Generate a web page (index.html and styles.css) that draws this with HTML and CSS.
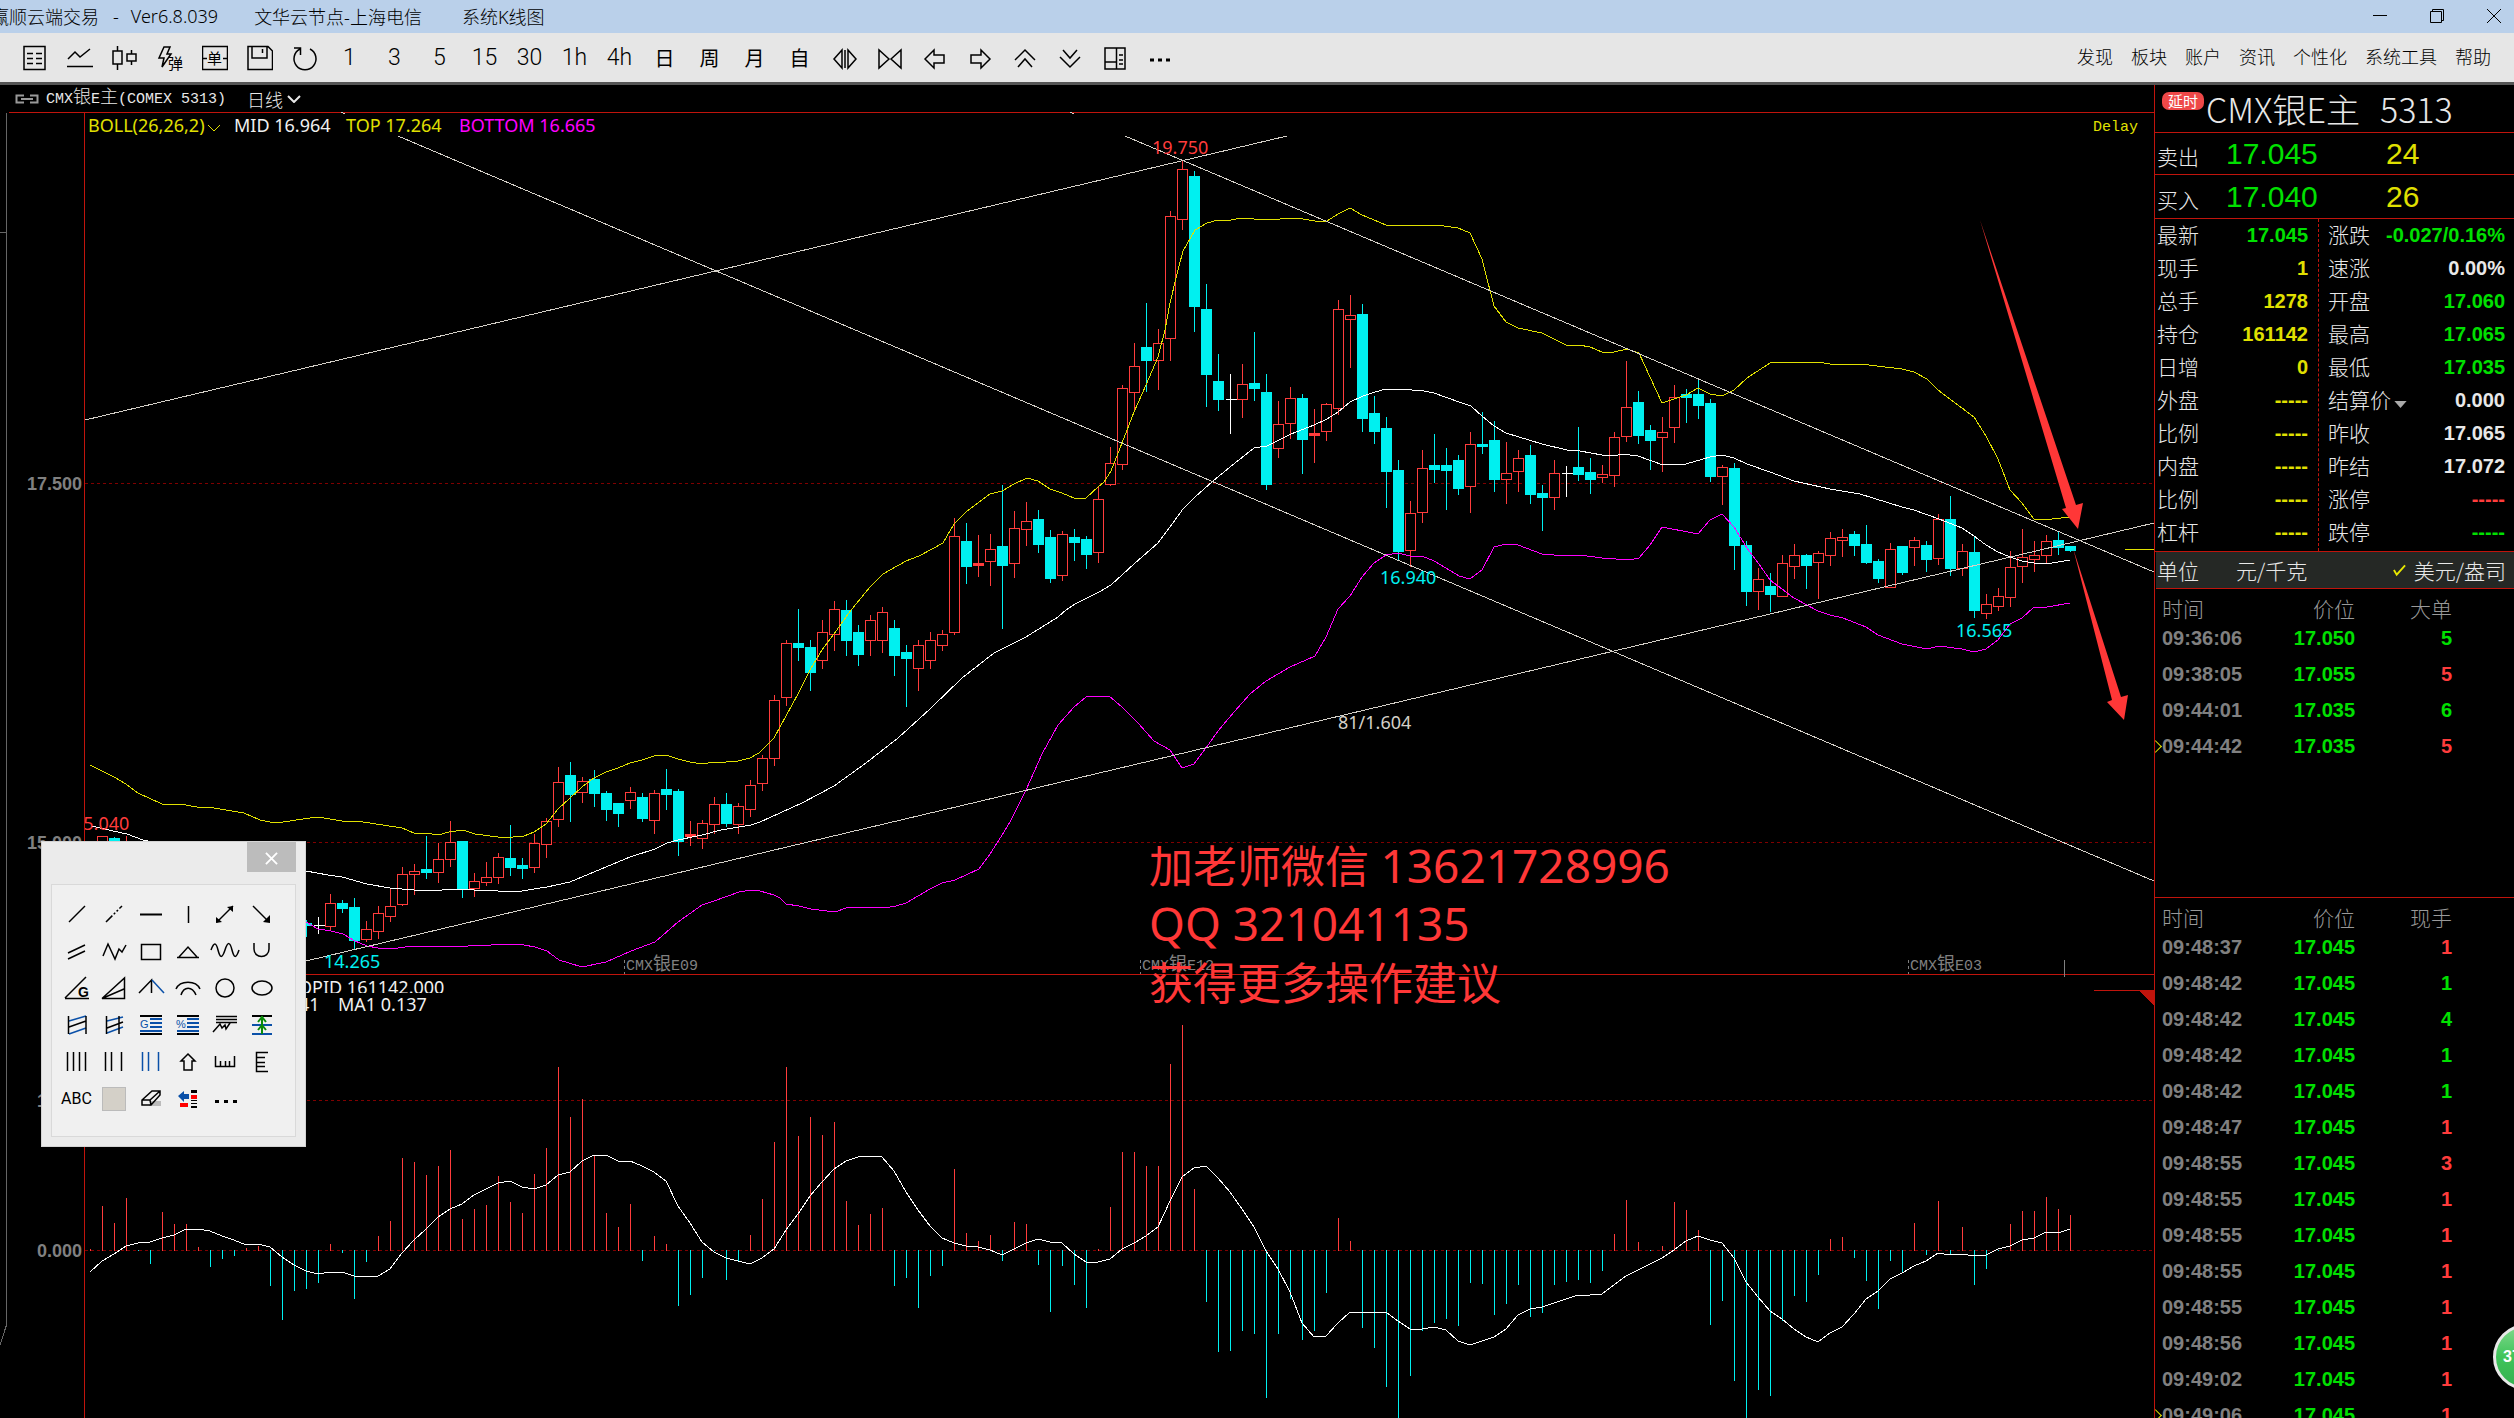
FILE: index.html
```html
<!DOCTYPE html>
<html lang="zh-CN">
<head>
<meta charset="utf-8">
<title>赢顺云端交易</title>
<link rel="stylesheet" href="styles.css">
</head>
<body>
<header class="titlebar">
  <span class="app">赢顺云端交易</span>
  <span class="dash">-</span>
  <span class="ver">Ver6.8.039</span>
  <span class="node">文华云节点-上海电信</span>
  <span>系统K线图</span>
  <div class="winbtns">
    <button aria-label="最小化"><svg viewBox="0 0 14 14"><path d="M0 6.500H14"/></svg></button>
    <button aria-label="还原"><svg viewBox="0 0 14 14"><path d="M.5 2.500H11.500V13.500H.5ZM2.500 2.500V.5H13.500V11.500H11.500"/></svg></button>
    <button aria-label="关闭"><svg viewBox="0 0 14 14"><path d="M0 0L14 14M14 0L0 14"/></svg></button>
  </div>
</header>

<nav class="toolbar">
  <div class="tools">
    <button aria-label="报价"><svg viewBox="0 0 26 26"><path d="M2 1.500H23V24.500H2ZM5 8.500H11M14 8.500H20M5 13.500H11M14 13.500H20M5 18.500H11M14 18.500H20"/></svg></button>
    <button aria-label="分时"><svg viewBox="0 0 26 26"><path d="M0 21.500H26M1 14L8 7L13 12L23 4"/></svg></button>
    <button aria-label="K线"><svg viewBox="0 0 26 26"><path d="M1 6H10V19H1ZM5.500 1V6M5.500 19V25M15 9H24V16H15ZM19.500 5V9M19.500 16V20"/></svg></button>
    <button aria-label="闪弹"><svg viewBox="0 0 26 26"><path d="M7 2H13L10 9H14L5 22L7 13H2Z"/><text x="11" y="24" class="mini">弹</text></svg></button>
    <button aria-label="下单"><svg viewBox="0 0 26 26"><path d="M0.500 1.500H25.500V24.500H0.500ZM0 13.500H5M21 13.500H26"/><text x="5" y="19" class="mini">单</text></svg></button>
    <button aria-label="保存"><svg viewBox="0 0 26 26"><path d="M1 1.500H21L25.500 6V24.500H1ZM5 2V13H20V2M15.500 4V8"/></svg></button>
    <button aria-label="刷新"><svg viewBox="0 0 26 26"><path d="M8 4A11 11 0 1 0 18 4M2 3H8.500V10"/></svg></button>
    <button>1</button><button>3</button><button>5</button><button>15</button><button>30</button><button>1h</button><button>4h</button>
    <button class="cj">日</button><button class="cj">周</button><button class="cj">月</button><button class="cj">自</button>
    <button aria-label="放大"><svg viewBox="0 0 26 26"><path d="M2 14L10 5V23ZM24 14L16 5V23ZM13 5V23"/></svg></button>
    <button aria-label="缩小"><svg viewBox="0 0 26 26"><path d="M12 14L2 5V23ZM14 14L24 5V23Z"/></svg></button>
    <button aria-label="左移"><svg viewBox="0 0 26 26"><path d="M3 14L12 5V10H22V18H12V23Z"/></svg></button>
    <button aria-label="右移"><svg viewBox="0 0 26 26"><path d="M23 14L14 5V10H4V18H14V23Z"/></svg></button>
    <button aria-label="上移"><svg viewBox="0 0 26 26"><path d="M3 15L13 5L23 15M6 22L13 14L20 22"/></svg></button>
    <button aria-label="下移"><svg viewBox="0 0 26 26"><path d="M3 12L13 22L23 12M6 5L13 13L20 5"/></svg></button>
    <button aria-label="布局"><svg viewBox="0 0 26 26"><path d="M3 3H23V24H3ZM14.500 3V24M3 17H14M17 10H21M17 15H21M17 19H21"/></svg></button>
    <button aria-label="更多"><svg viewBox="0 0 26 26"><path class="dots" d="M3 15h4M11 15h4M19 15h4"/></svg></button>
  </div>
  <div class="menu"><a href="#">发现</a><a href="#">板块</a><a href="#">账户</a><a href="#">资讯</a><a href="#">个性化</a><a href="#">系统工具</a><a href="#">帮助</a></div>
</nav>

<main class="main">
  <section class="chart">
    <div class="charthead">
      <svg class="link" viewBox="0 0 24 10"><path d="M9 1.500H1.500V8.500H9M15 1.500H22.500V8.500H15M6 5H18"/></svg>
      <span class="mono">CMX<span class="han">银</span>E<span class="han">主</span>(COMEX 5313)</span>
      <button class="period">日线<svg viewBox="0 0 14 8"><path d="M1 1L7 7L13 1"/></svg></button>
    </div>
    <svg class="plot" viewBox="0 112 2154 1306">
      <g class="crisp">
        <path class="side" d="M6.500 113V1325L0 1345M0 232.500H6"/>
        <path class="grid" d="M85 483.500H2154M85 842.500H2154M85 1100.500H2154M85 1250.500H2154"/>
        <path class="axis" d="M9 112.500H2154M84.500 112V1418M84 974.500H2154M2094 990.500H2154"/>
        <path class="corner" d="M2139 990H2154V1006Z"/>
        <g id="bars"></g>
        <polyline class="white" id="ma"/>
        <g id="candles"></g>
        <polyline class="white" id="mid"/>
        <polyline class="yellow" id="top"/>
        <polyline class="magenta" id="bottom"/>
        <path class="trend" d="M85 420L1287 136M398 136L2154 881M1125 136L2154 572M306 961L2154 523M341 112L345 114M1070 112L1074 114"/>
        <path class="yellow" d="M2125 549.500H2154"/>
        <path class="tick" d="M624.500 960V974M1140.500 960V974M1908.500 960V974"/>
        <path class="tick1" d="M2064.500 960V977"/>
      </g>
      <g class="ylab"><text x="82" y="490">17.500</text><text x="82" y="849">15.000</text><text x="82" y="1107">1.000</text><text x="82" y="1257">0.000</text></g>
      <g class="lab">
        <text class="ty" x="88" y="132">BOLL(26,26,2)</text><path class="yellow" d="M208 125L214 131L220 125"/>
        <text class="tw" x="234" y="132">MID 16.964</text>
        <text class="ty" x="346" y="132">TOP 17.264</text>
        <text class="tm" x="459" y="132">BOTTOM 16.665</text>
        <text class="tr" x="1152" y="154">19.750</text>
        <text class="tc" x="1380" y="584">16.940</text>
        <text class="tc" x="1956" y="637">16.565</text>
        <text class="tc" x="324" y="968">14.265</text>
        <text class="tt" x="1338" y="729">81/1.604</text>
        <text class="tw" x="338" y="1011">MA1 0.137</text>
        <text class="tw" x="299" y="1011">41</text>
      </g>
      <svg x="85" y="810" width="60" height="24" class="lab"><text class="tr" x="-12" y="20">15.040</text></svg>
      <svg x="290" y="976" width="200" height="17" class="lab"><text class="tw" x="8" y="18">OPID 161142.000</text></svg>
      <g class="mlab"><text x="626" y="970">CMX<tspan class="han">银</tspan>E09</text><text x="1142" y="970">CMX<tspan class="han">银</tspan>E12</text><text x="1910" y="970">CMX<tspan class="han">银</tspan>E03</text><text class="ty" x="2093" y="131">Delay</text></g>
      <path class="arrow" d="M1980 220L2066 508L2062 509L2078 529L2083 503L2076 505ZM2073 548L2112 700L2107 702L2124 720L2128 695L2121 697Z"/>
      <g class="note"><text x="1149" y="883">加老师微信 <tspan class="num">13621728996</tspan></text><text x="1149" y="941" class="num">QQ 321041135</text><text x="1149" y="1000">获得更多操作建议</text></g>
    </svg>

    <div class="palette" role="dialog" aria-label="画线工具">
      <button class="close" aria-label="关闭"><svg viewBox="0 0 14 14"><path d="M1 1L13 13M13 1L1 13"/></svg></button>
      <div class="icons">
        <button aria-label="线段"><svg viewBox="-15 -15 30 30"><path d="M-8 8L8 -8"/></svg></button>
        <button aria-label="虚线"><svg viewBox="-15 -15 30 30"><path stroke-dasharray="9 2 2 2 2 2" d="M-8 8L8 -8"/></svg></button>
        <button aria-label="水平线"><svg viewBox="-15 -15 30 30"><path class="b2" d="M-11 .5H11"/></svg></button>
        <button aria-label="垂直线"><svg viewBox="-15 -15 30 30"><path d="M.5 -8V9"/></svg></button>
        <button aria-label="双箭头"><svg viewBox="-15 -15 30 30"><path d="M-8 8L8 -8"/><path class="f" d="M-9 9V3L-3 8ZM8 -8V-2L2 -7Z"/></svg></button>
        <button aria-label="箭头"><svg viewBox="-15 -15 30 30"><path d="M-9 -8L6 7"/><path class="f" d="M8 9V1L1 8Z"/></svg></button>

        <button aria-label="平行线"><svg viewBox="-15 -15 30 30"><path d="M-9 2L8 -6M-9 8L8 0"/></svg></button>
        <button aria-label="折线"><svg viewBox="-15 -15 30 30"><path d="M-11 5L-6 -7L1 8L5 -2L8 1L12 -6"/></svg></button>
        <button aria-label="矩形"><svg viewBox="-15 -15 30 30"><path d="M-9.500 -6.500H9.500V8.500H-9.500Z"/></svg></button>
        <button aria-label="三角形"><svg viewBox="-15 -15 30 30"><path d="M-11 6.500H11M-9 6L0 -4L9 6"/></svg></button>
        <button aria-label="正弦线"><svg viewBox="-15 -15 30 30"><path d="M-14 -1C-11 -9 -9 -9 -7 -1S-3 8 0 -1S5 -9 7 -1S11 8 14 -1"/></svg></button>
        <button aria-label="U形线"><svg viewBox="-15 -15 30 30"><path d="M-8 -8V-2C-8 8 7 8 7 -2V-8"/></svg></button>

        <button aria-label="江恩角度"><svg viewBox="-15 -15 30 30"><path d="M-12 10.500H12M-12 10L9 -11"/><text x="1" y="9" class="g">G</text></svg></button>
        <button aria-label="扇形线"><svg viewBox="-15 -15 30 30"><path d="M-12 10.500H10.500V-10L-12 10.500L10 1"/></svg></button>
        <button aria-label="分叉线"><svg viewBox="-15 -15 30 30"><path d="M-12 5L.5 -8V5"/><path class="bl" d="M1 -8L13 5"/></svg></button>
        <button aria-label="弧线"><svg viewBox="-15 -15 30 30"><path d="M-12 1C-8 -8 8 -8 12 1M-7 7C-4 -2 4 -2 8 7"/></svg></button>
        <button aria-label="圆"><svg viewBox="-15 -15 30 30"><circle r="9"/></svg></button>
        <button aria-label="椭圆"><svg viewBox="-15 -15 30 30"><ellipse rx="10" ry="7"/></svg></button>

        <button aria-label="通道"><svg viewBox="-15 -15 30 30"><path class="bl" d="M-8 -4L9 -9M-8 9L9 3"/><path d="M-8.500 -9V9M9 -9V9M-8 2L9 -4"/></svg></button>
        <button aria-label="回归通道"><svg viewBox="-15 -15 30 30"><path class="bl" d="M-7 -4L9 -8M-7 8L9 2"/><path d="M-7.500 -9V9M5 -9V9M-7 3L9 -3"/></svg></button>
        <button aria-label="黄金分割"><svg viewBox="-15 -15 30 30"><path class="b2" d="M-11 -9H11M-11 9H11"/><path class="bl b2" d="M-1 -6H11M-1 -2H11M-1 2H11M-11 6H11"/><text x="-11" y="3" class="gb">G</text></svg></button>
        <button aria-label="百分比线"><svg viewBox="-15 -15 30 30"><path class="b2" d="M-11 -9H11M-11 9H11"/><path class="bl b2" d="M-1 -6H11M-1 -2H11M-1 2H11M-11 6H11"/><text x="-12" y="3" class="gb">%</text></svg></button>
        <button aria-label="波浪线"><svg viewBox="-15 -15 30 30"><path d="M-9 -8.500H12M-9 -5.500H12M-9 -2.500H12M-12 7L-5 -1L-3 3L0 0L1 4L5 -2"/></svg></button>
        <button aria-label="测距"><svg viewBox="-15 -15 30 30"><path class="b2" d="M-10 -9H10"/><path class="bl b2" d="M-10 0H10M-10 9H10"/><path class="gr" d="M0 -9V9M-4 -3L0 -8L4 -3M-4 5L0 0L4 5"/></svg></button>

        <button aria-label="周期线"><svg viewBox="-15 -15 30 30"><path d="M-9.500 -10V9M-3.500 -10V9M2.500 -10V9M8.500 -10V9"/></svg></button>
        <button aria-label="时间线"><svg viewBox="-15 -15 30 30"><path d="M-8.500 -10V9M-2.500 -10V9M7.500 -10V9"/></svg></button>
        <button aria-label="斐波那契线"><svg viewBox="-15 -15 30 30"><path class="bl" d="M-8.500 -10V9M-2.500 -10V9M7.500 -10V9"/></svg></button>
        <button aria-label="上箭头"><svg viewBox="-15 -15 30 30"><path d="M0 -8L7 -1H4V8H-4V-1H-7Z"/></svg></button>
        <button aria-label="横尺"><svg viewBox="-15 -15 30 30"><path d="M-9.500 -6V4.500H9.500V-6M-4.500 4V-1M.5 4V-1M4.500 4V-1"/></svg></button>
        <button aria-label="竖尺"><svg viewBox="-15 -15 30 30"><path d="M6 -9.500H-5.500V9.500H6M-5 -4.500H3M-5 .5H3M-5 4.500H3"/></svg></button>

        <button class="abc">ABC</button>
        <button aria-label="颜色"><span class="swatch"></span></button>
        <button aria-label="橡皮"><svg viewBox="-15 -15 30 30"><path class="shade" d="M0 2H10V7H-2Z"/><path d="M-9 1L1 -8H9V-4L0 6H-9ZM-9 1H-1L9 -8M-1 1L0 6"/></svg></button>
        <button aria-label="设置"><svg viewBox="-15 -15 30 30"><path class="fb" d="M-10 -3L-4 -8V-5H1V0H-4V3Z"/><path class="fr" d="M-8 4H0V8H-8ZM3 -4H9V0H3Z"/><path class="f" d="M3 -9H9V-6H3ZM3 1H9V2H3ZM3 4H9V5H3ZM3 7H9V9H3Z"/></svg></button>
        <button aria-label="更多"><svg viewBox="-15 -15 30 30"><path class="dots" d="M-10 2.500h4M-1 2.500h4M8 2.500h4"/></svg></button>
      </div>
    </div>
  </section>

  <aside class="quote">
    <h1><span class="tag">延时</span>CMX银E主<span class="code">5313</span></h1>
    <div class="ask"><span>卖出</span><b>17.045</b><i>24</i></div>
    <div class="ask bid"><span>买入</span><b>17.040</b><i>26</i></div>
    <div class="stats">
      <dl>
        <div><dt>最新</dt><dd class="g">17.045</dd></div>
        <div><dt>现手</dt><dd>1</dd></div>
        <div><dt>总手</dt><dd>1278</dd></div>
        <div><dt>持仓</dt><dd>161142</dd></div>
        <div><dt>日增</dt><dd>0</dd></div>
        <div><dt>外盘</dt><dd>-----</dd></div>
        <div><dt>比例</dt><dd>-----</dd></div>
        <div><dt>内盘</dt><dd>-----</dd></div>
        <div><dt>比例</dt><dd>-----</dd></div>
        <div><dt>杠杆</dt><dd>-----</dd></div>
      </dl>
      <dl>
        <div><dt>涨跌</dt><dd class="g">-0.027/0.16%</dd></div>
        <div><dt>速涨</dt><dd class="w">0.00%</dd></div>
        <div><dt>开盘</dt><dd class="g">17.060</dd></div>
        <div><dt>最高</dt><dd class="g">17.065</dd></div>
        <div><dt>最低</dt><dd class="g">17.035</dd></div>
        <div><dt>结算价<svg class="drop" viewBox="0 0 14 8"><path d="M0 0H14L7 8Z"/></svg></dt><dd class="w">0.000</dd></div>
        <div><dt>昨收</dt><dd class="w">17.065</dd></div>
        <div><dt>昨结</dt><dd class="w">17.072</dd></div>
        <div><dt>涨停</dt><dd class="r">-----</dd></div>
        <div><dt>跌停</dt><dd class="g">-----</dd></div>
      </dl>
    </div>
    <div class="unit"><span>单位</span><button class="kg">元/千克</button><button class="oz"><svg viewBox="0 0 14 13"><path d="M1 6L4 11L13 1"/></svg>美元/盎司</button></div>
    <div class="trades big">
      <table>
        <thead><tr><th>时间</th><th>价位</th><th>大单</th></tr></thead>
        <tbody>
          <tr><td>09:36:06</td><td>17.050</td><td class="g">5</td></tr>
          <tr><td>09:38:05</td><td>17.055</td><td>5</td></tr>
          <tr><td>09:44:01</td><td>17.035</td><td class="g">6</td></tr>
          <tr class="cur"><td>09:44:42</td><td>17.035</td><td>5</td></tr>
        </tbody>
      </table>
    </div>
    <div class="trades">
      <table>
        <thead><tr><th>时间</th><th>价位</th><th>现手</th></tr></thead>
        <tbody>
          <tr><td>09:48:37</td><td>17.045</td><td>1</td></tr>
          <tr><td>09:48:42</td><td>17.045</td><td class="g">1</td></tr>
          <tr><td>09:48:42</td><td>17.045</td><td class="g">4</td></tr>
          <tr><td>09:48:42</td><td>17.045</td><td class="g">1</td></tr>
          <tr><td>09:48:42</td><td>17.045</td><td class="g">1</td></tr>
          <tr><td>09:48:47</td><td>17.045</td><td>1</td></tr>
          <tr><td>09:48:55</td><td>17.045</td><td>3</td></tr>
          <tr><td>09:48:55</td><td>17.045</td><td>1</td></tr>
          <tr><td>09:48:55</td><td>17.045</td><td>1</td></tr>
          <tr><td>09:48:55</td><td>17.045</td><td>1</td></tr>
          <tr><td>09:48:55</td><td>17.045</td><td>1</td></tr>
          <tr><td>09:48:56</td><td>17.045</td><td>1</td></tr>
          <tr><td>09:49:02</td><td>17.045</td><td>1</td></tr>
          <tr class="cur"><td>09:49:06</td><td>17.045</td><td>1</td></tr>
        </tbody>
      </table>
    </div>
    <div class="ball">37</div>
  </aside>
</main>
<script src="chart.js"></script>
</body>
</html>
```
FILE: styles.css
```css
* { box-sizing: border-box; }
body { margin: 0; height: 100vh; overflow: hidden; display: flex; flex-direction: column; background: #000; color: #e8e8e8; font-family: "Noto Sans CJK SC", sans-serif; font-size: 18px; font-weight: 300; }
button { border: 0; padding: 0; margin: 0; background: none; color: inherit; font: inherit; }
a { color: inherit; text-decoration: none; }
svg { fill: none; stroke: currentColor; }
text { stroke: none; fill: currentColor; }

.titlebar { flex: none; height: 33px; padding-bottom: 2px; display: flex; align-items: center; background: #bad0ea; color: #000; white-space: nowrap; font-family: "Noto Sans", "Noto Sans CJK SC", sans-serif; }
.app { margin-left: -9px; }
.dash { margin: 0 12px 0 14px; }
.node { margin: 0 40px 0 36px; }
.winbtns { margin-left: auto; display: flex; gap: 43px; padding-right: 13px; }
.winbtns button { width: 14px; height: 14px; display: block; }
.winbtns svg { display: block; width: 14px; height: 14px; }

.toolbar { flex: none; height: 52px; display: flex; justify-content: space-between; align-items: center; background: #e6e6e6; color: #000; border-bottom: 3px solid #555; }
.tools { display: flex; padding-left: 12px; }
.tools button { width: 45px; height: 49px; display: flex; align-items: center; justify-content: center; font: 300 23px "Roboto", sans-serif; }
.tools button.cj { font: 20px "Noto Sans CJK SC", sans-serif; }
.tools svg { width: 26px; height: 26px; stroke-width: 1.5; }
.dots { stroke-width: 3; }
.mini { font: 15px "Noto Sans CJK SC", sans-serif; }
.menu { display: flex; gap: 18px; padding: 0 23px 3px 0; white-space: nowrap; }

.main { flex: 1; min-height: 0; display: grid; grid-template-columns: minmax(0, 1fr) 360px; }
.chart { position: relative; min-width: 0; overflow: hidden; }
.charthead { height: 27px; display: flex; align-items: center; padding-left: 15px; white-space: nowrap; }
.link { width: 24px; height: 10px; margin-right: 7px; color: #999; stroke-width: 2; }
.mono, .mlab { font-family: "Liberation Mono", "Noto Sans CJK SC", monospace; font-size: 15px; line-height: 20px; }
.han { font-size: 18px; }
.period { margin-left: 21px; display: flex; align-items: center; gap: 4px; line-height: 20px; }
.period svg { width: 14px; height: 8px; stroke-width: 2; }
.plot { display: block; width: 100%; font-weight: 400; }
.crisp { shape-rendering: crispEdges; }
.side { stroke: #666; }
.grid { stroke: #800000; stroke-dasharray: 3 3; }
.axis { stroke: #c0140c; }
.corner { fill: #c0140c; stroke: none; }
.up { stroke: #ff3c3c; fill: #000; }
.upfill { stroke: #ff3c3c; fill: #ff3c3c; }
.down { stroke: #00f0f0; fill: #00f0f0; }
.flat, .white { stroke: #fff; }
.yellow { stroke: #e0e000; }
.magenta { stroke: #f0f; }
.trend { stroke: #d4d0c8; }
.tick, .tick1 { stroke: #808080; }
.tick { stroke-dasharray: 3 3; }
.ylab { color: #808080; font: bold 18px "Liberation Sans", sans-serif; text-anchor: end; }
.lab { font: 18px "Noto Sans", sans-serif; }
.mlab { color: #808080; }
.ty { fill: #e0e000; }
.tw { fill: #f0f0f0; }
.tt { fill: #d4d0c8; }
.tm { fill: #f0f; }
.tr { fill: #ff3c3c; }
.tc { fill: #00f0f0; }
.arrow { fill: #ff3737; stroke: none; }
.note { color: #ff3737; font: 44px "Noto Sans", "Noto Sans CJK SC", sans-serif; }
.num { font-size: 46px; }

.palette { position: absolute; left: 41px; top: 756px; width: 265px; height: 306px; padding: 0 9px 9px; display: flex; flex-direction: column; background: #ebebeb; border: 1px solid #d4d4d4; color: #000; }
.close { align-self: flex-end; width: 49px; height: 30px; background: #bcbcbc; color: #fff; }
.close svg { width: 13px; height: 13px; stroke-width: 2; }
.icons { flex: 1; margin-top: 12px; padding: 10px 0 0 6px; display: grid; grid-template-columns: repeat(6, 37px); grid-auto-rows: 37px; align-content: start; background: #f0f0f0; border: 1px solid #d9d9d9; }
.icons button { display: flex; align-items: center; justify-content: center; }
.icons svg { width: 30px; height: 30px; stroke-width: 1.5; }
.icons .b2 { stroke-width: 2; }
.icons .dots { stroke-width: 3; }
.bl { stroke: #0a50a8; }
.gr { stroke: #0a8a0a; stroke-width: 2; }
.f { fill: #000; stroke: none; }
.fb { fill: #0a50a8; stroke: none; }
.fr { fill: #f00; stroke: none; }
.shade { fill: #bbb; stroke: none; }
text.g { font: bold 14px "Liberation Sans", sans-serif; }
.gb { font: 11px "Liberation Sans", sans-serif; fill: #0a50a8; }
.icons .abc { font: 16px "Roboto", sans-serif; }
.swatch { width: 24px; height: 24px; background: #d4d0c8; border: 1px solid #bbb; }

.quote { position: relative; overflow: hidden; border-left: 1px solid #c0140c; font-size: 21px; white-space: nowrap; }
h1 { margin: 0; height: 48px; padding-left: 7px; display: flex; align-items: center; border-bottom: 1px solid #c0140c; font-size: 34px; font-weight: 300; line-height: 47px; }
.tag { align-self: flex-start; margin: 7px 2px 0 0; width: 42px; height: 18px; border-radius: 7px; background: #ee4848; color: #fff; font-size: 15px; font-weight: 400; line-height: 17px; text-align: center; }
.code { margin-left: 20px; }
.ask { height: 42px; padding-left: 2px; display: grid; grid-template-columns: 69px 160px 1fr; align-items: center; border-bottom: 1px solid #c0140c; }
.bid { height: 44px; }
.ask span { padding-top: 4px; }
.ask b, .ask i { font: 30px "Liberation Sans", sans-serif; color: #00e000; }
.ask i { color: #e0e000; }
.stats { display: grid; grid-template-columns: 164px 1fr; height: 333px; border-bottom: 1px solid #c0140c; }
dl { margin: 0; padding: 0 9px; }
dl:first-child { padding: 0 10px 0 2px; border-right: 1px dashed #c0140c; }
dl div { height: 33px; display: flex; justify-content: space-between; align-items: center; }
dt { line-height: 31px; padding-bottom: 2px; }
dd { margin: 0; font: bold 20px "Liberation Sans", sans-serif; color: #e0e000; }
.drop { width: 13px; height: 7px; margin-left: 3px; fill: #aaa; stroke: none; }
dd.g, td.g { color: #00e000; }
dd.w { color: #e8e8e8; }
dd.r { color: #ff3c3c; }
.unit { height: 37px; margin-left: 1px; padding: 0 8px 0 1px; display: flex; align-items: center; background: #252825; border-bottom: 1px solid #c0140c; }
.kg { margin-left: 37px; }
.oz { margin-left: auto; display: flex; align-items: center; gap: 8px; }
.oz svg { width: 13px; height: 13px; color: #e8e800; stroke-width: 2; }
.trades { padding-top: 7px; }
.big { height: 309px; border-bottom: 1px solid #c0140c; }
table { width: 297px; border-collapse: collapse; table-layout: fixed; font: bold 20px "Liberation Sans", sans-serif; }
th { padding: 0; height: 24px; font: 300 21px "Noto Sans CJK SC", sans-serif; line-height: 24px; color: #999; text-align: right; }
th:nth-child(n+2), td:nth-child(n+2) { text-align: right; }
th:first-child, td:first-child { width: 102px; padding-left: 7px; text-align: left; }
th:nth-child(2) { width: 98px; }
td { padding: 0; height: 36px; color: #808080; position: relative; }
td:nth-child(2) { color: #00e000; }
td:nth-child(3) { color: #ff3c3c; }
td.g:nth-child(3) { color: #00e000; }
.cur td:first-child::before { content: ""; position: absolute; left: -4px; top: 14px; width: 8px; height: 8px; border: solid #e8e800; border-width: 1px 1px 0 0; transform: rotate(45deg); }
.ball { position: absolute; right: -45px; bottom: 28px; width: 66px; height: 66px; padding-left: 7px; border: 3px solid #e8e8e8; border-radius: 50%; background: linear-gradient(#7fd88a, #3fc45a 50%, #35b050); color: #fff; font: bold 16px/60px "Liberation Sans", sans-serif; }
```
FILE: chart.js
```js
const NS = 'http://www.w3.org/2000/svg';
const X0 = 90, STEP = 12, ZERO = 1250;
const el = (parent, name, attrs) => {
  const n = document.createElementNS(NS, name);
  for (const k in attrs) n.setAttribute(k, attrs[k]);
  parent.appendChild(n);
};

// index, kind (r up, f thin up, c down, w flat), high, body top, body bottom, low
const candles = `1 r 836 836 858 860,2 c 837 838 850 855,3 r 836 845 855 860,18 c 920 923 925 936,19 w 917 925 925 933,20 r 894 903 926 929,21 c 900 903 908 912,22 c 898 907 940 949,
23 r 921 929 939 941,24 r 906 913 931 938,25 r 889 906 916 921,26 r 867 874 904 905,27 r 864 871 874 894,28 c 836 869 872 878,29 r 843 859 872 882,30 r 821 842 859 866,
31 c 841 841 888 897,32 r 873 881 888 896,33 r 862 877 882 885,34 r 853 857 877 883,35 c 825 858 867 875,36 c 858 865 868 878,37 r 834 843 867 872,38 r 818 821 844 857,
39 r 767 782 819 826,40 c 762 775 794 821,41 r 777 781 792 802,42 c 770 779 793 806,43 c 791 793 809 820,44 c 803 803 813 826,45 r 787 792 800 808,46 c 793 797 818 821,
47 r 790 793 820 833,48 c 769 789 794 809,49 c 789 791 841 855,50 f 821 834 836 845,51 r 820 823 838 848,52 r 797 804 824 833,53 c 793 804 823 826,54 r 803 806 824 833,
55 r 780 785 809 816,56 r 755 758 783 790,57 r 695 700 758 765,58 r 640 643 697 705,59 c 609 643 647 660,60 c 640 647 672 690,61 r 620 632 660 668,62 r 601 609 634 650,
63 c 600 610 640 655,64 c 625 632 654 665,65 r 615 620 640 655,66 r 607 612 640 652,67 c 620 628 655 675,68 c 645 652 658 706,69 r 640 645 668 690,70 r 632 640 660 668,
71 r 630 634 645 650,72 r 518 536 632 634,73 c 523 541 566 583,74 f 535 563 565 576,75 r 534 549 561 585,76 c 485 546 565 628,77 r 511 528 563 577,78 r 502 521 529 545,
79 c 510 519 544 552,80 c 530 537 578 582,81 r 531 534 575 580,82 c 529 537 542 560,83 c 536 539 554 568,84 r 487 499 552 562,85 r 447 463 484 485,86 r 385 388 464 469,
87 r 343 366 392 410,88 c 303 347 360 391,89 r 329 343 360 389,90 r 211 216 338 360,91 r 160 169 219 229,92 c 171 176 306 331,93 c 284 309 374 406,94 c 354 381 399 410,
95 w 374 399 399 433,96 r 364 384 399 417,97 c 332 383 388 400,98 c 374 392 484 489,99 r 401 424 448 457,100 r 387 398 423 438,101 c 394 398 439 473,102 f 409 433 435 462,
103 r 403 404 431 440,104 r 300 309 408 414,105 r 295 315 319 367,106 c 304 314 418 431,107 c 396 413 431 443,108 c 417 428 471 507,109 c 460 470 551 559,110 r 501 513 550 566,
111 r 450 468 512 522,112 c 434 465 469 482,113 c 448 465 470 509,114 c 455 460 488 494,115 r 432 444 486 512,116 c 412 444 446 453,117 c 421 440 479 491,118 r 442 473 479 503,
119 r 450 458 471 491,120 c 445 455 494 503,121 c 485 493 497 530,122 r 460 473 497 509,123 w 466 473 473 496,124 c 427 467 474 480,125 c 458 472 479 493,126 r 465 474 477 482,
127 r 432 437 475 486,128 r 361 407 436 441,129 c 391 402 435 443,130 c 425 430 440 469,131 r 417 432 437 471,132 r 385 397 427 442,133 c 389 394 397 422,134 c 380 394 405 418,
135 c 399 403 476 481,136 r 465 467 476 504,137 c 463 468 545 569,138 c 541 545 591 605,139 r 568 579 591 609,140 c 573 586 594 611,141 r 555 563 596 596,142 r 544 555 566 578,
143 c 554 555 565 588,144 r 551 553 562 598,145 r 532 538 555 565,146 r 529 537 540 556,147 c 531 534 545 555,148 c 525 544 562 563,149 c 559 561 578 582,150 r 543 549 587 587,
151 c 546 546 572 574,152 r 537 540 547 565,153 c 541 545 559 571,154 r 514 519 558 564,155 c 496 519 568 575,156 r 544 551 568 575,157 c 537 552 610 617,158 r 594 604 613 618,
159 r 588 596 606 610,160 r 551 567 597 606,161 r 529 557 566 582,162 r 541 555 559 571,163 r 535 541 555 563,164 c 532 540 547 554,165 c 546 546 550 551`;

const g = document.getElementById('candles');
candles.split(',').forEach(row => {
  const [i, k, h, t, b, l] = row.trim().split(' ').map((v, n) => n === 1 ? v : +v);
  const x = X0 + STEP * i + 0.5;
  const cls = { r: 'up', f: 'upfill', c: 'down', w: 'flat' }[k];
  el(g, 'path', { class: cls, d: `M${x} ${h}V${l + 1}` });
  if (k === 'w') el(g, 'path', { class: cls, d: `M${x - 5} ${t + 0.5}H${x + 6}` });
  else el(g, 'rect', { class: cls, x: x - 5, y: t + 0.5, width: 10, height: Math.max(b - t, 1) });
});

// end of each histogram bar; above the zero line is up, below is down
const bars = [1249,1206,1223,1198,1251,1264,1212,1224,1224,1247,1267,1259,1256,1248,1246,1286,1320,1291,1289,1283,1244,1253,1299,1262,1236,1221,1158,1162,1175,1166,1150,1219,1209,1205,1176,1202,1213,1174,1148,1067,1117,1099,1156,1213,1227,1204,1261,1236,1244,1306,1295,1278,1251,1280,1262,1235,1199,1142,
1067,1136,1117,1135,1122,1201,1225,1214,1208,1286,1278,1308,1276,1266,1169,1233,1241,1235,1261,1222,1224,1265,1312,1266,1285,1308,1249,1207,1152,1152,1166,1166,1064,1025,1189,1302,1352,1351,1331,1334,1398,1334,1299,1340,1331,1293,1218,1241,1328,1348,1387,1418,1376,1331,1323,1319,1326,1283,1284,1315,
1304,1285,1317,1313,1285,1282,1280,1283,1271,1234,1200,1242,1251,1246,1202,1210,1230,1325,1301,1381,1418,1390,1396,1321,1296,1302,1275,1239,1237,1258,1281,1309,1261,1273,1223,1255,1201,1254,1227,1285,1269,1251,1224,1211,1211,1197,1209,1215];
const bg = document.getElementById('bars');
bars.forEach((y, i) => el(bg, 'path', {
  class: y < ZERO ? 'up' : 'down',
  d: `M${X0 + STEP * i + 0.5} ${y < ZERO ? ZERO + 1 : ZERO}V${y}`
}));

const ma = [1272,1261,1254,1246,1243,1242,1238,1235,1229,1229,1231,1236,1240,1245,1244,1247,1257,1265,1271,1274,1272,1272,1276,1277,1276,1269,1253,1240,1229,1217,1209,1204,1195,1189,1183,1181,1187,1189,1185,1175,1172,1161,1155,1155,1161,1161,1166,1172,1181,1206,1223,1242,1252,1258,1261,1264,1258,1249,
1230,1214,1196,1182,1169,1161,1157,1156,1157,1171,1192,1210,1226,1238,1243,1246,1247,1250,1255,1249,1243,1239,1242,1243,1254,1262,1262,1259,1249,1243,1236,1227,1201,1177,1168,1166,1178,1192,1209,1227,1251,1269,1292,1323,1337,1336,1323,1312,1312,1313,1312,1321,1329,1329,1327,1330,1341,1345,1341,1337,
1329,1315,1309,1307,1303,1299,1295,1295,1294,1285,1276,1270,1264,1258,1250,1241,1236,1240,1243,1258,1282,1297,1311,1319,1329,1337,1342,1333,1327,1314,1299,1291,1279,1273,1266,1261,1253,1255,1254,1256,1255,1249,1246,1240,1238,1232,1233,1229];
document.getElementById('ma').setAttribute('points', ma.map((y, i) => `${X0 + STEP * i},${y}`).join(' '));

const curves = {
  top: `90,765 114,777 126,784 138,793 162,804 180,804 197,807 214,808 244,813 260,820 270,822 283,822 303,819 318,817 342,821 357,821 402,828 414,833 426,833 438,835 449,832 463,830 475,834 498,837 513,837 524,836 534,832 546,824 558,809 570,798 582,787 594,778 606,772 618,768 630,763 642,760 654,756 666,755 678,759 690,762 702,764 714,762 726,762 738,761 750,758 759,753 774,738 786,716 798,694 810,670 822,650 834,634 846,617 852,609 870,587 883,574 906,561 919,556 932,549 943,543 954,524 966,512 979,502 990,494 1002,491 1014,484 1027,478 1038,481 1050,489 1062,493 1074,498 1086,498 1098,487 1104,482 1111,471 1122,443 1134,412 1146,385 1158,357 1165,330 1170,303 1178,270 1183,251 1195,230 1207,223 1218,220 1231,220 1241,218 1254,219 1280,219 1291,218 1303,219 1315,221 1327,221 1338,214 1350,208 1362,215 1374,220 1386,225 1405,225 1437,225 1458,228 1470,233 1482,259 1494,306 1506,322 1518,328 1542,333 1566,345 1579,345 1590,347 1602,352 1614,352 1627,349 1639,353 1650,377 1662,403 1674,399 1686,395 1698,388 1710,394 1722,396 1734,390 1747,378 1770,363 1782,362 1794,363 1818,362 1830,364 1860,364 1877,366 1902,369 1914,372 1927,379 1938,390 1962,408 1974,417 1986,436 1998,459 2005,477 2010,490 2022,503 2034,519 2052,519 2070,517`,
  mid: `92,826 113,831 127,834 143,840 306,871 328,875 342,877 367,884 390,888 414,890 442,890 462,889 474,890 498,891 522,891 534,889 547,887 570,882 582,877 606,867 630,857 655,849 667,843 678,840 702,835 721,830 739,827 751,825 760,822 802,803 834,786 866,763 898,738 930,709 962,678 994,653 1026,637 1058,617 1066,610 1075,604 1099,592 1111,585 1134,564 1158,543 1170,527 1183,509 1195,497 1213,481 1230,467 1254,448 1267,446 1291,434 1314,425 1327,419 1338,412 1350,402 1363,396 1375,392 1386,389 1400,389 1424,391 1434,393 1459,402 1471,406 1482,416 1494,426 1506,433 1542,444 1567,450 1580,451 1602,455 1614,456 1622,454 1638,456 1663,465 1686,464 1710,457 1722,455 1734,458 1747,464 1770,472 1794,481 1830,489 1860,494 1902,507 1914,510 1939,519 1962,528 1974,536 1986,545 1998,552 2010,557 2022,561 2034,563 2052,563 2070,560`,
  bottom: `306,922 318,929 331,931 343,934 355,941 367,946 378,948 390,949 413,946 439,946 451,947 468,946 491,945 506,944 524,945 535,947 547,951 559,960 582,967 606,962 631,951 655,942 678,922 702,905 714,901 739,892 751,890 760,891 774,895 780,898 786,904 799,906 811,909 835,912 846,908 858,907 884,908 896,906 906,903 918,896 930,889 942,883 955,880 979,869 990,854 999,840 1010,822 1026,790 1042,754 1058,725 1074,707 1086,697 1109,696 1122,707 1138,723 1154,741 1170,750 1182,768 1194,764 1206,748 1218,731 1234,712 1250,694 1266,681 1290,667 1315,656 1326,637 1338,609 1350,596 1362,577 1374,563 1386,555 1398,553 1410,556 1422,556 1434,561 1446,568 1459,576 1470,579 1482,570 1494,547 1506,544 1518,545 1542,554 1566,556 1580,555 1602,558 1629,560 1639,558 1650,545 1662,527 1698,534 1710,520 1722,514 1734,527 1747,548 1759,564 1770,580 1794,598 1818,611 1830,615 1843,618 1866,627 1878,635 1902,644 1927,649 1939,646 1962,649 1974,652 1986,649 1998,640 2010,624 2022,618 2034,607 2047,607 2070,603`
};
for (const id in curves) document.getElementById(id).setAttribute('points', curves[id]);
```
